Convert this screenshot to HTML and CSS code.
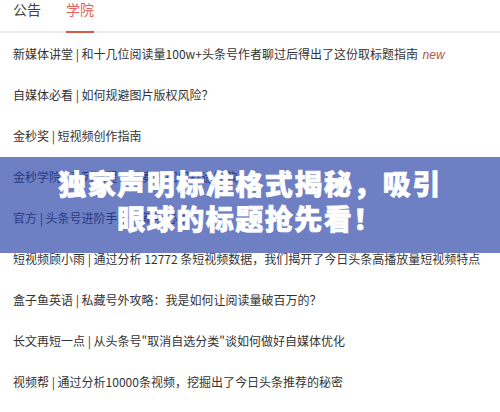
FILE: index.html
```html
<!DOCTYPE html>
<html lang="zh-CN">
<head>
<meta charset="utf-8">
<title>学院</title>
<link rel="stylesheet" href="styles.css">
</head>
<body>
<div class="page">
  <div class="tabs">
    <div class="tab">公告</div>
    <div class="tab active">学院</div>
  </div>
  <ul class="list">
    <li>新媒体讲堂 | 和十几位阅读量100w+头条号作者聊过后得出了这份取标题指南 <em class="new">new</em></li>
    <li>自媒体必看 | 如何规避图片版权风险？</li>
    <li>金秒奖 | 短视频创作指南</li>
    <li>金秒学院 | 系列课程：节奏感如何打造爆款</li>
    <li>官方 | 头条号进阶手册：新手必读</li>
    <li>短视频顾小雨 | 通过分析 12772 条短视频数据，我们揭开了今日头条高播放量短视频特点</li>
    <li>盒子鱼英语 | 私藏号外攻略：我是如何让阅读量破百万的？</li>
    <li>长文再短一点 | 从头条号"取消自选分类"谈如何做好自媒体优化</li>
    <li>视频帮 | 通过分析10000条视频，挖掘出了今日头条推荐的秘密</li>
  </ul>
  <div class="banner">
    <h1 class="banner-title">独家声明标准格式揭秘，吸引<br>眼球的标题抢先看！</h1>
  </div>
</div>
</body>
</html>
```
FILE: styles.css
```css
html, body {
  margin: 0;
  padding: 0;
  background: #ffffff;
}
body {
  font-family: "Noto Sans CJK SC", "Noto Sans", sans-serif;
  color: #333333;
}
.page {
  position: relative;
  width: 500px;
  height: 412px;
  overflow: hidden;
}
.tabs {
  display: flex;
  gap: 25px;
  padding-left: 13px;
  border-bottom: 2px solid #ededed;
}
.tab {
  font-size: 14px;
  line-height: 18px;
  padding-bottom: 13px;
  color: #444444;
}
.tab.active {
  color: #e0645a;
  border-bottom: 2px solid #d9584e;
  margin-bottom: -2px;
  padding-bottom: 11px;
}
.list {
  list-style: none;
  margin: 0;
  padding: 0 0 0 13px;
}
.list li {
  font-size: 12px;
  line-height: 41px;
  height: 41px;
  white-space: nowrap;
  color: #333333;
}
.new {
  font-family: "Liberation Sans", Arial, sans-serif;
  font-size: 12px;
  color: #b5544e;
  margin-left: 2px;
}
.banner {
  position: absolute;
  left: 0;
  top: 157px;
  width: 500px;
  height: 96px;
  background: rgba(35, 61, 165, 0.66);
  display: flex;
  align-items: center;
  justify-content: center;
}
.banner-title {
  margin: 0 0 9px 0;
  font-size: 28px;
  line-height: 35px;
  font-weight: 900;
  color: #ffffff;
  -webkit-text-stroke: 0.7px #ffffff;
  text-align: center;
  letter-spacing: 1.5px;
}
```
